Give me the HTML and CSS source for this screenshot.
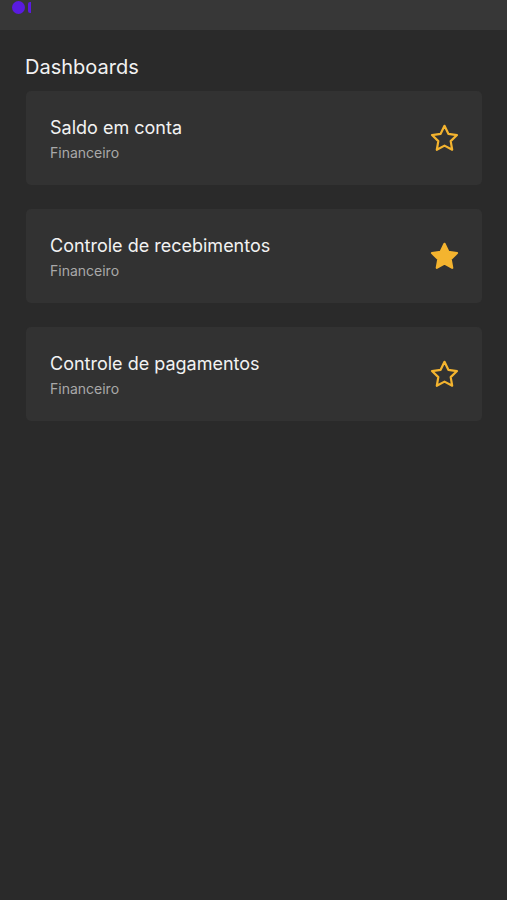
FILE: index.html
```html
<!DOCTYPE html>
<html lang="pt-BR">
<head>
    <meta charset="UTF-8">
    <meta name="viewport" content="width=device-width, initial-scale=1.0">
    <title>Dashboards</title>
    <link rel="stylesheet" href="styles.css">
</head>
<body>
    <div class="topbar">
        <span class="rec-dot"></span>
        <span class="rec-mark"></span>
    </div>
    <div class="content">
        <h2 class="title">Dashboards</h2>
        <div class="card">
            <div class="card-text">
                <p class="card-name">Saldo em conta</p>
                <p class="card-group">Financeiro</p>
            </div>
            <svg class="star" viewBox="0 0 24 24"><path d="M12 2.8l2.8 5.8 6.3.9-4.6 4.4 1.1 6.3L12 17.2l-5.6 3 1.1-6.3-4.6-4.4 6.3-.9z" fill="none" stroke="#f4b42f" stroke-width="1.6" stroke-linejoin="round"/></svg>
        </div>
        <div class="card">
            <div class="card-text">
                <p class="card-name">Controle de recebimentos</p>
                <p class="card-group">Financeiro</p>
            </div>
            <svg class="star" viewBox="0 0 24 24"><path d="M12 2.8l2.8 5.8 6.3.9-4.6 4.4 1.1 6.3L12 17.2l-5.6 3 1.1-6.3-4.6-4.4 6.3-.9z" fill="#f4b42f" stroke="#f4b42f" stroke-width="1.6" stroke-linejoin="round"/></svg>
        </div>
        <div class="card">
            <div class="card-text">
                <p class="card-name">Controle de pagamentos</p>
                <p class="card-group">Financeiro</p>
            </div>
            <svg class="star" viewBox="0 0 24 24"><path d="M12 2.8l2.8 5.8 6.3.9-4.6 4.4 1.1 6.3L12 17.2l-5.6 3 1.1-6.3-4.6-4.4 6.3-.9z" fill="none" stroke="#f4b42f" stroke-width="1.6" stroke-linejoin="round"/></svg>
        </div>
    </div>
</body>
</html>
```

FILE: styles.css
```css
body {
    font-family: Inter, "Noto Sans", sans-serif;
    background-color: #2a2a2a;
    margin: 0;
    height: 100vh;
}

.topbar {
    height: 30px;
    background-color: #373737;
    display: flex;
    align-items: flex-start;
    padding: 1px 0 0 12px;
    box-sizing: border-box;
}

.rec-dot {
    width: 13px;
    height: 13px;
    border-radius: 50%;
    background-color: #5a1be0;
}

.rec-mark {
    width: 3px;
    height: 11px;
    margin: 1px 0 0 3px;
    border-radius: 2px 0 0 2px;
    background-color: #5a1be0;
}

.content {
    padding: 0 25px 0 26px;
}

.title {
    margin: 0 0 13px -1px;
    padding-top: 26px;
    font-size: 20px;
    font-weight: 400;
    line-height: 22px;
    color: #f2f2f2;
}

.card {
    background-color: #323232;
    border-radius: 5px;
    height: 94px;
    margin-bottom: 24px;
    display: flex;
    align-items: center;
    justify-content: space-between;
    padding: 0 22px 0 24px;
    box-sizing: border-box;
}

.card-text {
    margin-top: 2px;
}

.card-name {
    margin: 0 0 5px;
    font-size: 18px;
    line-height: 22px;
    color: #f2f2f2;
}

.card-group {
    margin: 0;
    font-size: 14px;
    line-height: 18px;
    color: #a9a9a9;
}

.star {
    width: 33px;
    height: 33px;
    margin: 1px -1px 0 0;
}
```
